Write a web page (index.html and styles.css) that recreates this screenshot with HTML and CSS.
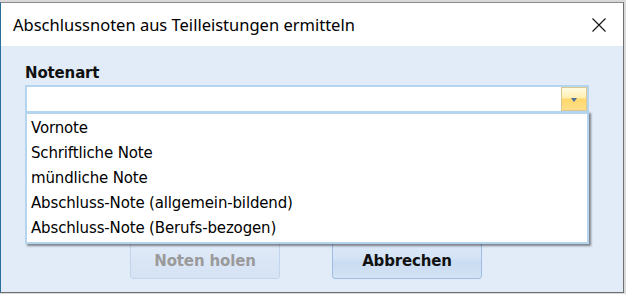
FILE: index.html
```html
<!DOCTYPE html>
<html lang="de">
<head>
    <meta charset="UTF-8">
    <title>Abschlussnoten aus Teilleistungen ermitteln</title>
    <link rel="stylesheet" href="styles.css">
</head>
<body>

    <div class="window">
        <div class="titlebar">
            <span class="title">Abschlussnoten aus Teilleistungen ermitteln</span>
            <svg class="close" width="14" height="14" viewBox="0 0 14 14">
                <path d="M0.5 0.5 L13.5 13.5 M13.5 0.5 L0.5 13.5" stroke="#111" stroke-width="1.1" fill="none"/>
            </svg>
        </div>

        <div class="content">
            <label class="field-label">Notenart</label>
            <div class="combo">
                <div class="combo-text"></div>
                <div class="combo-button"><span class="arrow"></span></div>
            </div>

            <!-- aufgeklappte Liste liegt über dem restlichen Formular -->
            <ul class="dropdown">
                <li>Vornote</li>
                <li>Schriftliche Note</li>
                <li>mündliche Note</li>
                <li>Abschluss-Note (allgemein-bildend)</li>
                <li>Abschluss-Note (Berufs-bezogen)</li>
            </ul>

            <div class="actions">
                <button class="btn" disabled>Noten holen</button>
                <button class="btn">Abbrechen</button>
            </div>
        </div>
    </div>

</body>
</html>
```

FILE: styles.css
```css
body {
    margin: 0;
    padding: 0;
    background-color: #d9d9d9;
    font-family: "DejaVu Sans", Verdana, sans-serif;
    color: #111;
}

.window {
    box-sizing: border-box;
    width: 624px;
    height: 291px;
    margin-top: 2px;
    border-top: 1px solid #8a8a8a;
    border-left: 1px solid #2a6f9c;
    border-right: 1px solid #6f6f6f;
    border-bottom: 1px solid #6f6f6f;
    display: flex;
    flex-direction: column;
}

.titlebar {
    height: 43px;
    background-color: #fff;
    display: flex;
    align-items: center;
    padding: 1px 17px 0 12px;
    box-sizing: border-box;
}

.title {
    font-family: "Noto Sans", "Open Sans", sans-serif;
    font-size: 16.5px;
    line-height: 22px;
    color: #000;
}

.close {
    margin-left: auto;
}

.content {
    flex: 1;
    position: relative;
    background-color: #e2ecf9;
    padding: 18px 0 0 24px;
    display: flex;
    flex-direction: column;
}

.field-label {
    font-weight: bold;
    font-size: 15px;
    line-height: 18px;
    letter-spacing: -0.15px;
    margin-bottom: 3px;
}

.combo {
    box-sizing: border-box;
    width: 564px;
    height: 28px;
    border: 2px solid #b5d5ef;
    background-color: #fff;
    display: flex;
}

.combo-text {
    flex: 1;
}

.combo-button {
    box-sizing: border-box;
    width: 26px;
    height: 24px;
    border: 1px solid #d9c891;
    background: linear-gradient(#fffbe0 0%, #ffefb0 45%, #ffd76a 50%, #ffe08a 100%);
    display: flex;
    align-items: center;
    justify-content: center;
}

.arrow {
    width: 0;
    height: 0;
    border-left: 3px solid transparent;
    border-right: 3px solid transparent;
    border-top: 4px solid #4c6e9e;
    margin-top: 1px;
}

.dropdown {
    position: absolute;
    left: 24px;
    top: 65px;
    box-sizing: border-box;
    width: 564px;
    height: 133px;
    margin: 0;
    padding: 2px 0 0 0;
    list-style: none;
    background-color: #fff;
    border: 2px solid #b5d5ef;
    border-top-width: 3px;
    box-shadow: 2px 2px 2px rgba(0, 0, 0, 0.45);
}

.dropdown li {
    height: 25px;
    line-height: 25px;
    padding-left: 4px;
    font-size: 15px;
    letter-spacing: -0.15px;
    color: #000;
}

.actions {
    margin-top: auto;
    margin-bottom: 13px;
    padding-left: 105px;
    display: flex;
    gap: 52px;
}

.btn {
    box-sizing: border-box;
    width: 150px;
    height: 37px;
    border: 1px solid #9fbde2;
    border-radius: 3px;
    background: linear-gradient(#dde9f8 0%, #d3e3f6 45%, #c9dcf2 55%, #d4e3f5 100%);
    font-family: "DejaVu Sans", Verdana, sans-serif;
    font-weight: bold;
    font-size: 15px;
    letter-spacing: -0.15px;
    color: #111;
    padding: 0;
}

.btn:disabled {
    border-color: #c3d5ec;
    background: linear-gradient(#e2ecf9 0%, #dae6f6 50%, #d6e3f4 100%);
    color: #9a9a9a;
}
```
